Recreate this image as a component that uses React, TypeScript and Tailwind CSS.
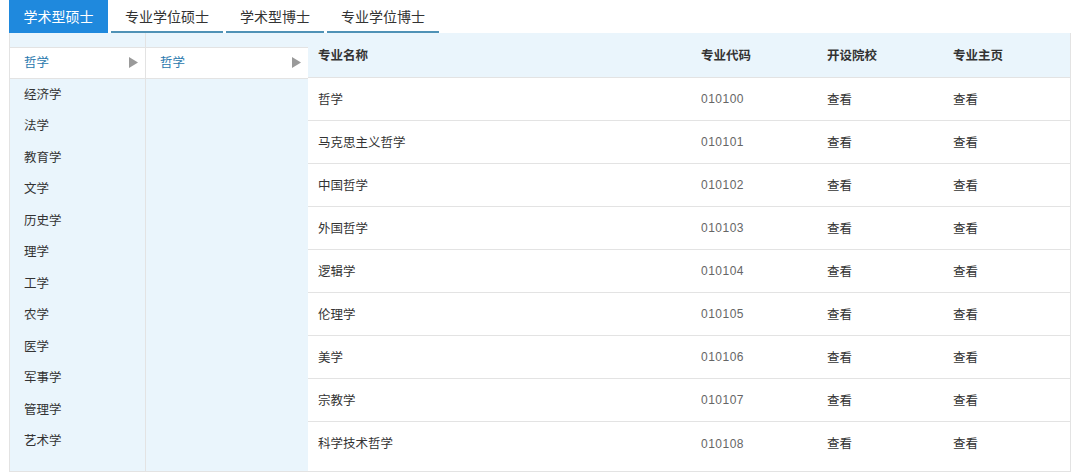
import React from "react";

const TABS = ["学术型硕士", "专业学位硕士", "学术型博士", "专业学位博士"];

const CATEGORIES = [
  "哲学",
  "经济学",
  "法学",
  "教育学",
  "文学",
  "历史学",
  "理学",
  "工学",
  "农学",
  "医学",
  "军事学",
  "管理学",
  "艺术学",
];

const MAJORS = [
  { name: "哲学", code: "010100" },
  { name: "马克思主义哲学", code: "010101" },
  { name: "中国哲学", code: "010102" },
  { name: "外国哲学", code: "010103" },
  { name: "逻辑学", code: "010104" },
  { name: "伦理学", code: "010105" },
  { name: "美学", code: "010106" },
  { name: "宗教学", code: "010107" },
  { name: "科学技术哲学", code: "010108" },
];

function Arrow() {
  return (
    <svg width="9" height="11" viewBox="0 0 9 11" className="shrink-0">
      <path d="M0 0 L9 5.5 L0 11 Z" fill="#9a9a9a" />
    </svg>
  );
}

export default function App() {
  return (
    <div
      className="h-[473px] w-[1080px] bg-white text-[12.5px] text-[#333]"
      style={{ fontFamily: '"Noto Sans CJK SC", "Noto Sans", sans-serif' }}
    >
      <div className="flex h-[33px] gap-[3px] pl-[9px]">
        {TABS.map((t, i) =>
          i === 0 ? (
            <div
              key={t}
              className="flex h-[33px] w-[99px] items-center justify-center bg-[#1f89dd] text-[14px] text-white"
            >
              {t}
            </div>
          ) : (
            <div
              key={t}
              className="flex h-[33px] items-center justify-center border-b-2 border-[#4f92b6] px-[14px] pt-[1px] text-[14px] text-[#333]"
            >
              {t}
            </div>
          ),
        )}
      </div>

      <div className="ml-[9px] flex w-[1062px] border-b border-[#e3e3e3]">
        <div className="w-[137px] border-l border-r border-[#e3e3e3] bg-[#eaf5fc] py-[14px]">
          {CATEGORIES.map((c, i) =>
            i === 0 ? (
              <div
                key={c}
                className="flex h-[31.5px] items-center justify-between border-y border-[#e3e3e3] bg-white pl-[14px] pr-[7px] text-[#2878ad]"
              >
                <span>{c}</span>
                <Arrow />
              </div>
            ) : (
              <div key={c} className="flex h-[31.5px] items-center pl-[14px]">
                {c}
              </div>
            ),
          )}
        </div>

        <div className="w-[162px] bg-[#eaf5fc] py-[14px]">
          <div className="flex h-[31.5px] items-center justify-between border-y border-[#e3e3e3] bg-white pl-[14px] pr-[7px] text-[#2878ad]">
            <span>哲学</span>
            <Arrow />
          </div>
        </div>

        <div className="flex-1 border-r border-[#e3e3e3] bg-white">
          <div className="flex h-[45px] items-center border-b border-[#e3e3e3] bg-[#eaf5fc] font-bold">
            <div className="w-[393px] pl-[10px]">专业名称</div>
            <div className="w-[126px]">专业代码</div>
            <div className="w-[126px]">开设院校</div>
            <div className="flex-1">专业主页</div>
          </div>
          {MAJORS.map((m, i) => (
            <div
              key={m.code}
              className={`flex h-[43px] items-center ${i < MAJORS.length - 1 ? "border-b border-[#e3e3e3]" : ""}`}
            >
              <div className="w-[393px] pl-[10px]">{m.name}</div>
              <div
                className="w-[126px] text-[12px] tracking-[0.5px] text-[#666]"
                style={{ fontFamily: '"Liberation Sans", Arial, sans-serif' }}
              >
                {m.code}
              </div>
              <div className="w-[126px]">查看</div>
              <div className="flex-1">查看</div>
            </div>
          ))}
        </div>
      </div>
    </div>
  );
}
